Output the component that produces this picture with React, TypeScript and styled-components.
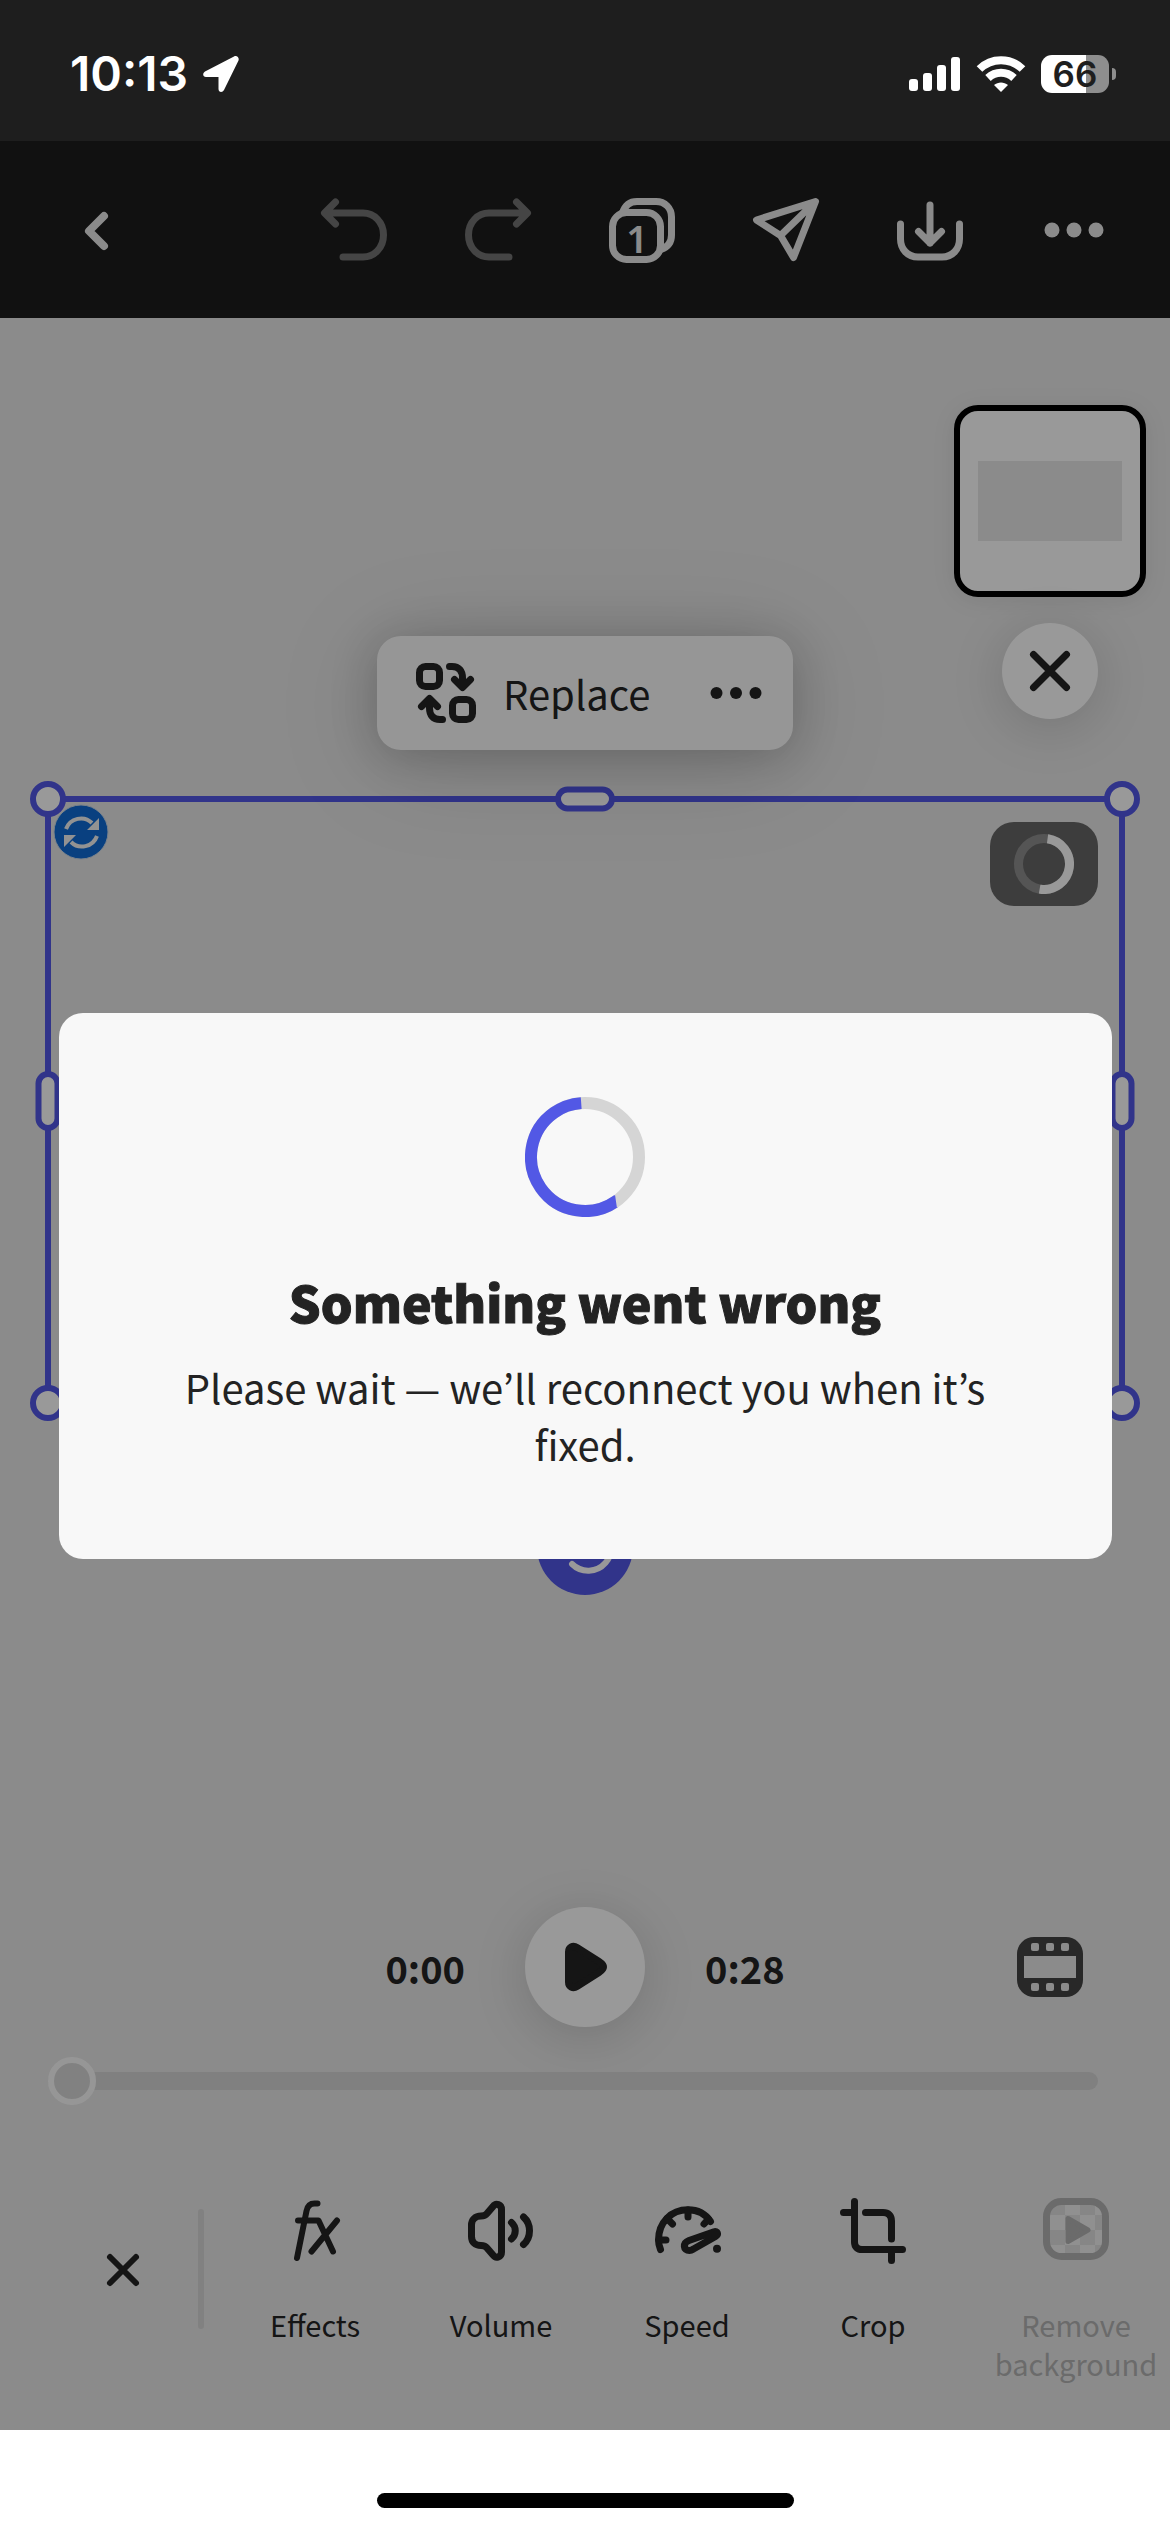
import React from "react";
import styled, { createGlobalStyle, css } from "styled-components";

const GlobalStyle = createGlobalStyle`
  * { box-sizing: border-box; }
  body { margin: 0; background: #fff; }
  button { border: 0; padding: 0; margin: 0; background: none; color: inherit; font: inherit; cursor: pointer; }
`;

const ink = "#232323";
const accent = "#5257e6";
const canvas = "#e8e8e8";
const sans = `"Noto Sans CJK KR", "Noto Sans", sans-serif`;

const Screen = styled.div`
  display: flex;
  flex-direction: column;
  min-height: 100vh;
  font-family: ${sans};
  color: ${ink};
`;

/* ---------- status bar ---------- */

const StatusBar = styled.header`
  display: flex;
  justify-content: space-between;
  align-items: center;
  height: 141px;
  padding: 7px 54px 0 70px;
  background: #1e1e1e;
  color: #fff;
`;

const StatusGroup = styled.div`
  display: flex;
  align-items: center;
  gap: 15px;
`;

const Clock = styled.time`
  font: 600 48px/54px Inter, sans-serif;
`;

const BatteryWrap = styled.div`
  display: flex;
  align-items: center;
  gap: 3px;
`;

const Battery = styled.div`
  width: 68px;
  height: 38px;
  border-radius: 11px;
  background: linear-gradient(to right, #fff 66%, #8e8e8e 66%);
  color: #1e1e1e;
  font: 600 35px/38px Inter, sans-serif;
  text-align: center;
`;

const BatteryTip = styled.div`
  width: 4px;
  height: 12px;
  border-radius: 0 4px 4px 0;
  background: #8e8e8e;
`;

/* ---------- editor ---------- */

const Editor = styled.main`
  position: relative;
  flex: 1;
  display: flex;
  flex-direction: column;
  background: ${canvas};
`;

const TopBar = styled.nav`
  display: flex;
  align-items: center;
  height: 177px;
  padding: 0 24px;
  background: #1d1d1d;
`;

const BarSpacer = styled.div`
  flex: 1;
`;

const BarButton = styled.button`
  display: grid;
  place-items: center;
  width: 144px;
  height: 144px;
  color: #e8e8e8;
  &:disabled { color: #737373; }
`;

const Glyph = styled.svg<{ $stroke?: number }>`
  display: block;
  width: 72px;
  height: 72px;
  fill: none;
  stroke: currentColor;
  stroke-width: ${(p) => p.$stroke ?? 7};
  stroke-linecap: round;
  stroke-linejoin: round;
`;

const PageCount = styled.text`
  fill: currentColor;
  stroke: none;
  font: 600 38px "Noto Sans", sans-serif;
  text-anchor: middle;
`;

const Stage = styled.section`
  flex: 1;
  padding-top: 87px;
`;

const PageRail = styled.div`
  display: flex;
  flex-direction: column;
  align-items: center;
  gap: 26px;
  width: 192px;
  margin: 0 24px 77px auto;
`;

const PageThumb = styled.button`
  display: grid;
  place-items: center;
  width: 192px;
  height: 192px;
  border: 6px solid #000;
  border-radius: 24px;
  background: #fff;
  box-shadow: 0 3px 24px rgba(0, 0, 0, 0.08);
`;

const PagePreview = styled.span`
  width: 144px;
  height: 80px;
  background: ${canvas};
`;

const RoundButton = styled.button<{ $size: number }>`
  display: grid;
  place-items: center;
  width: ${(p) => p.$size}px;
  height: ${(p) => p.$size}px;
  border-radius: 50%;
  background: #fff;
  box-shadow: 0 9px 54px rgba(0, 0, 0, 0.16);
`;

const Selection = styled.div`
  position: relative;
  margin: 0 45px;
  aspect-ratio: 1080 / 610;
  border: 6px solid ${accent};
`;

type Spot = { $x: number; $y: number };

const Handle = styled.span<Spot & { $kind: "corner" | "wide" | "tall" }>`
  position: absolute;
  left: ${(p) => p.$x}%;
  top: ${(p) => p.$y}%;
  border: 6px solid ${accent};
  background: #fff;
  border-radius: 18px;
  transform: translate(-50%, -50%);
  ${(p) => p.$kind === "corner" && css`width: 36px; height: 36px;`}
  ${(p) => p.$kind === "wide" && css`width: 60px; height: 25px;`}
  ${(p) => p.$kind === "tall" && css`width: 25px; height: 60px;`}
`;

const HandleLayer = styled.div`
  position: absolute;
  inset: -3px;
`;

const SyncBadge = styled.svg`
  position: absolute;
  left: 2px;
  top: 2px;
  width: 56px;
  height: 56px;
`;

const LoadBadge = styled.div`
  position: absolute;
  right: 21px;
  top: 20px;
  display: grid;
  place-items: center;
  width: 108px;
  height: 84px;
  border-radius: 24px;
  background: #666;
`;

const ContextBar = styled.div`
  position: absolute;
  left: 50%;
  bottom: calc(100% + 52px);
  transform: translateX(-50%);
  display: flex;
  align-items: center;
  width: 416px;
  height: 114px;
  padding: 0 21px 0 33px;
  border-radius: 24px;
  background: #fbfbfb;
  box-shadow: 0 12px 108px rgba(0, 0, 0, 0.14), 0 6px 48px rgba(0, 0, 0, 0.2);
`;

const ContextAction = styled.button`
  display: flex;
  align-items: center;
  gap: 21px;
  flex: 1;
  font-size: 40px;
  line-height: 57px;
`;

const RotateButton = styled.button`
  position: absolute;
  left: 50%;
  top: calc(100% + 99px);
  transform: translateX(-50%);
  display: grid;
  place-items: center;
  width: 96px;
  height: 96px;
  border-radius: 50%;
  background: ${accent};
  color: #fff;
`;

/* ---------- player ---------- */

const Player = styled.section`
  display: grid;
  grid-template-columns: 1fr auto 1fr;
  align-items: center;
  column-gap: 60px;
  padding: 0 72px;
`;

const Time = styled.span<{ $end?: boolean }>`
  justify-self: ${(p) => (p.$end ? "end" : "start")};
  font-weight: 700;
  font-size: 38px;
  line-height: 57px;
`;

const TimeRow = styled.div`
  display: flex;
  align-items: center;
  justify-content: space-between;
`;

const FilmButton = styled.button`
  display: grid;
  place-items: center;
  width: 96px;
  height: 96px;
  color: #434343;
`;

const Seek = styled.input`
  appearance: none;
  display: block;
  height: 48px;
  margin: 30px 72px 0 48px;
  background: none;
  &::-webkit-slider-runnable-track {
    height: 18px;
    border-radius: 9px;
    background: #d6d6d6;
  }
  &::-webkit-slider-thumb {
    appearance: none;
    width: 48px;
    height: 48px;
    margin-top: -15px;
    border: 6px solid #fbfbfb;
    border-radius: 50%;
    background: #d8d8d8;
  }
`;

/* ---------- bottom tools ---------- */

const Tools = styled.nav`
  display: flex;
  align-items: flex-start;
  padding: 89px 0 47px 48px;
  overflow: hidden;
`;

const CloseGroup = styled.div`
  display: flex;
  align-items: center;
  height: 150px;
  margin-right: 18px;
`;

const CloseTools = styled.button`
  display: grid;
  place-items: center;
  width: 150px;
  height: 150px;
`;

const Divider = styled.span`
  width: 6px;
  height: 120px;
  border-radius: 3px;
  background: #d8d8d8;
`;

const Tool = styled.button<{ $wide?: boolean }>`
  flex: none;
  display: flex;
  flex-direction: column;
  align-items: center;
  gap: 39px;
  width: ${(p) => (p.$wide ? 220 : 186)}px;
  font-size: 29px;
  line-height: 39px;
  &:disabled { color: #b2b2b2; }
`;

/* ---------- dialog ---------- */

const Scrim = styled.div`
  position: absolute;
  inset: 0;
  display: grid;
  place-items: center;
  background: rgba(0, 0, 0, 0.4);
`;

const Dialog = styled.div`
  display: flex;
  flex-direction: column;
  align-items: center;
  width: 90%;
  padding: 84px 96px 86px;
  border-radius: 24px;
  background: #f8f8f8;
  text-align: center;
`;

const DialogTitle = styled.h1`
  margin: 54px 0 28px;
  font-size: 50px;
  line-height: 60px;
  font-weight: 900;
  -webkit-text-stroke: 1px currentColor;
`;

const DialogText = styled.p`
  margin: 0;
  font-size: 40px;
  line-height: 57px;
`;

const HomeArea = styled.footer`
  display: flex;
  justify-content: center;
  align-items: flex-end;
  height: 102px;
  padding-bottom: 24px;
  background: #fff;
`;

const HomeIndicator = styled.div`
  width: 417px;
  height: 15px;
  border-radius: 8px;
  background: #000;
`;

/* ---------- drawings ---------- */

type IconProps = { children: React.ReactNode; stroke?: number };
const Icon = ({ children, stroke }: IconProps) => (
  <Glyph viewBox="0 0 72 72" $stroke={stroke} aria-hidden="true">{children}</Glyph>
);

const undoPath = "M17.5 8L6.5 19L17.5 30M8 19H45C56 19 65.5 28 65.5 41S56 63 45 63H25";

const Dots = ({ gap, r }: { gap: number; r: number }) => (
  <g fill="currentColor" stroke="none">
    <circle cx={36 - gap} cy="36" r={r} />
    <circle cx="36" cy="36" r={r} />
    <circle cx={36 + gap} cy="36" r={r} />
  </g>
);

type RingProps = { size: number; width: number; from: number; sweep: number; track: string; color: string };
const Ring = ({ size, width, from, sweep, track, color }: RingProps) => {
  const c = size / 2;
  const r = c - width / 2;
  return (
    <svg width={size} height={size} fill="none" strokeWidth={width} aria-hidden="true">
      <circle cx={c} cy={c} r={r} stroke={track} />
      <circle
        cx={c} cy={c} r={r} stroke={color} pathLength={360}
        strokeDasharray={`${sweep} ${360 - sweep}`}
        transform={`rotate(${from - 90} ${c} ${c})`}
      />
    </svg>
  );
};

const EffectsIcon = () => (
  <Icon stroke={6}>
    <path d="M38.5 9.5H35.5C31 9.5 28.5 12 27.5 17L18 64" />
    <path d="M19 26.5H39.5L54 57.5M58 26.5L32.5 57.5" />
  </Icon>
);

const VolumeIcon = () => (
  <Icon>
    <path d="M28 12.5L22 19.5C20.5 21.5 18.5 22 16 22C10 22 6.5 26 6.5 31V42.5C6.5 48 10 51.5 16 51.5C18.5 51.5 20.5 52 22 54L28 61C31 65 36.5 63 36.5 58V15.5C36.5 10.5 31 8.5 28 12.5Z" />
    <path d="M46.5 28.5C51.5 33 51.5 40.5 46.5 45M58.5 23C66.5 30 66.5 43.5 58.5 50.5" />
  </Icon>
);

const SpeedIcon = () => (
  <Icon>
    <path d="M9.5 55.5C8 52 7.5 49 7.5 46C7.5 28.5 20 15.8 37 15.8C46.5 15.8 54.5 20 59.5 27.5" />
    <path d="M37 16V23M16 24.5L21.5 30M57.5 25L53 30M8 46H15" />
    <path d="M63 37.8L38 46.5C31.5 49 32 56.5 38.5 56.5C40 56.5 41 56 42.5 55L64.5 42.5C68 40.5 66.5 36.8 63 37.8Z" />
    <circle cx="66" cy="54.7" r="4" fill="currentColor" stroke="none" />
  </Icon>
);

const CropIcon = () => (
  <Icon>
    <path d="M17.5 7.5V48C17.5 53 20.5 55.5 25 55.5H65.5M6.5 18.5H17.5M28.5 18.5H46C51.5 18.5 54.5 21.5 54.5 27V45M54.5 55.5V66.5" />
  </Icon>
);

const RemoveIcon = () => (
  <Icon>
    <clipPath id="tiles"><rect x="7" y="7" width="58" height="57" rx="14" /></clipPath>
    <g clipPath="url(#tiles)" stroke="none">
      <rect width="72" height="72" fill="#f1f1f1" />
      <path fill="#dfdfdf" d="M10 6h15v15H10zM40 6h15v15H40zM25 21h15v15H25zM55 21h15v15H55zM10 36h15v15H10zM40 36h15v15H40zM25 51h15v15H25zM55 51h15v15H55z" />
    </g>
    <rect x="6.5" y="7.5" width="59" height="55" rx="15" />
    <path fill="currentColor" strokeWidth="5" d="M28 24.500V47.500L48 36Z" />
  </Icon>
);

const tools = [
  { label: "Effects", icon: <EffectsIcon /> },
  { label: "Volume", icon: <VolumeIcon /> },
  { label: "Speed", icon: <SpeedIcon /> },
  { label: "Crop", icon: <CropIcon /> },
];

export default function App() {
  return (
    <Screen>
      <GlobalStyle />
      <StatusBar>
        <StatusGroup>
          <Clock>10:13</Clock>
          <svg width="36" height="36" viewBox="0 0 36 36" fill="#fff" aria-hidden="true">
            <path d="M31 .5 2 15.500C-1 17.500 0 21 3 21H15.500V33C15.500 36.500 19.500 37 21 34L35.500 4.500C36.500 2 34-1 31 .5Z" />
          </svg>
        </StatusGroup>
        <StatusGroup>
          <svg width="52" height="36" viewBox="0 0 52 36" fill="#fff" aria-hidden="true">
            <rect x="0" y="23" width="9" height="12" rx="3" />
            <rect x="14" y="17" width="9" height="18" rx="3" />
            <rect x="28" y="9" width="9" height="26" rx="3" />
            <rect x="42" y="1" width="9" height="34" rx="3" />
          </svg>
          <svg width="50" height="36" viewBox="0 0 50 36" fill="none" stroke="#fff" aria-hidden="true">
            <path strokeWidth="8" d="M3.500 13C15.500 1.200 34.500 1.200 46.500 13" />
            <path strokeWidth="8" d="M12 22C19.500 15 30.500 15 38 22" />
            <path fill="#fff" stroke="none" d="M25 36 18 29C22 25.500 28 25.500 32 29Z" />
          </svg>
          <BatteryWrap>
            <Battery>66</Battery>
            <BatteryTip />
          </BatteryWrap>
        </StatusGroup>
      </StatusBar>

      <Editor>
        <TopBar>
          <BarButton aria-label="Back"><Icon stroke={8}><path d="M44 22L29 37L44 52" /></Icon></BarButton>
          <BarSpacer />
          <BarButton aria-label="Undo" disabled><Icon><path d={undoPath} /></Icon></BarButton>
          <BarButton aria-label="Redo" disabled>
            <Icon><path d={undoPath} transform="translate(72 0) scale(-1 1)" /></Icon>
          </BarButton>
          <BarButton aria-label="Pages">
            <Icon>
              <rect x="6.5" y="18.5" width="48" height="47" rx="14" />
              <path strokeLinecap="butt" d="M16.500 19C19 11 24 7.500 31 7.500H50C59 7.500 65.500 14 65.500 23V41C65.500 48 62 53 55 55.500" />
              <PageCount x="31" y="59">1</PageCount>
            </Icon>
          </BarButton>
          <BarButton aria-label="Share">
            <Icon><path d="M65.500 7.500L6.500 26L30.500 41.500L43.500 63.500ZM30.500 41.500L64 9" /></Icon>
          </BarButton>
          <BarButton aria-label="Download">
            <Icon>
              <path d="M6.500 30V45C6.500 55 13.500 63 24 63H48C58.500 63 65.500 55 65.500 45V30M36 11V49M24.500 37.500L36 49L47.500 37.500" />
            </Icon>
          </BarButton>
          <BarButton aria-label="More"><Icon><Dots gap={22} r={7.5} /></Icon></BarButton>
        </TopBar>

        <Stage>
          <PageRail>
            <PageThumb aria-label="Page 1"><PagePreview /></PageThumb>
            <RoundButton $size={96} aria-label="Close preview">
              <Icon><path d="M19.500 19.500L52.500 52.500M52.500 19.500L19.500 52.500" /></Icon>
            </RoundButton>
          </PageRail>

          <Selection>
            <SyncBadge viewBox="0 0 56 56" aria-hidden="true">
              <circle cx="28" cy="28" r="27" fill="#0f6cd6" stroke="#c8d8ea" strokeWidth="1" />
              <g fill="none" stroke="#f4f4f4" strokeWidth="4">
                <path d="M13 25C17 14 31 11 39 19M44 32C40 43 26 46 18 38" />
              </g>
              <path fill="#f4f4f4" d="M46 14V26H34ZM11 43V31H23Z" />
            </SyncBadge>
            <LoadBadge><Ring size={60} width={9} from={8} sweep={182} track="#8e8e8e" color="#fff" /></LoadBadge>
            <HandleLayer>
              <Handle $kind="corner" $x={0} $y={0} />
              <Handle $kind="corner" $x={100} $y={0} />
              <Handle $kind="corner" $x={0} $y={100} />
              <Handle $kind="corner" $x={100} $y={100} />
              <Handle $kind="wide" $x={50} $y={0} />
              <Handle $kind="wide" $x={50} $y={100} />
              <Handle $kind="tall" $x={0} $y={50} />
              <Handle $kind="tall" $x={100} $y={50} />
            </HandleLayer>
            <ContextBar>
              <ContextAction>
                <Icon>
                  <rect x="9.500" y="9.500" width="20" height="20" rx="6" />
                  <rect x="42.500" y="42.500" width="20" height="20" rx="6" />
                  <path d="M39.500 9.500H42C49 9.500 52.500 14 52.500 21V30M44.500 22.500L52.500 30.500L60.500 22.500" />
                  <path d="M32.500 62.500H30C23 62.500 19.500 58 19.500 51V42M11.500 49.500L19.500 41.500L27.500 49.500" />
                </Icon>
                Replace
              </ContextAction>
              <button aria-label="More actions"><Icon><Dots gap={19.5} r={6} /></Icon></button>
            </ContextBar>
            <RotateButton aria-label="Rotate">
              <Icon stroke={6}><path d="M23 53A23 23 0 1 0 20 24M18 12V25H31" /></Icon>
            </RotateButton>
          </Selection>
        </Stage>

        <Player aria-label="Playback">
          <Time $end>0:00</Time>
          <RoundButton $size={120} aria-label="Play">
            <Icon><path fill="currentColor" d="M19.500 21V51C19.500 56 24 58 28 55.500L50 41.500C56 37.500 56 34.500 50 30.500L28 16.500C24 14 19.500 16 19.500 21Z" /></Icon>
          </RoundButton>
          <TimeRow>
            <Time>0:28</Time>
            <FilmButton aria-label="Timeline">
              <Icon>
                <rect x="3" y="6" width="66" height="60" rx="17" fill="currentColor" stroke="none" />
                <g fill={canvas} stroke="none">
                  <rect x="10" y="25" width="52" height="22" />
                  <rect x="17" y="12" width="8" height="8" rx="2" />
                  <rect x="32" y="12" width="8" height="8" rx="2" />
                  <rect x="47" y="12" width="8" height="8" rx="2" />
                  <rect x="17" y="52" width="8" height="8" rx="2" />
                  <rect x="32" y="52" width="8" height="8" rx="2" />
                  <rect x="47" y="52" width="8" height="8" rx="2" />
                </g>
              </Icon>
            </FilmButton>
          </TimeRow>
        </Player>
        <Seek type="range" min={0} max={28} defaultValue={0} aria-label="Seek" />

        <Tools>
          <CloseGroup>
            <CloseTools aria-label="Close tools">
              <Icon stroke={6}><path d="M23 24L49 50M49 24L23 50" /></Icon>
            </CloseTools>
            <Divider />
          </CloseGroup>
          {tools.map((t) => (
            <Tool key={t.label}>{t.icon}<span>{t.label}</span></Tool>
          ))}
          <Tool $wide disabled><RemoveIcon /><span>Remove<br />background</span></Tool>
        </Tools>

        <Scrim>
          <Dialog role="alertdialog" aria-labelledby="dialog-title" aria-describedby="dialog-text">
            <Ring size={120} width={12} from={145} sweep={211} track="#d5d5d5" color="#5258e5" />
            <DialogTitle id="dialog-title">Something went wrong</DialogTitle>
            <DialogText id="dialog-text">Please wait — we’ll reconnect you when it’s fixed.</DialogText>
          </Dialog>
        </Scrim>
      </Editor>

      <HomeArea><HomeIndicator /></HomeArea>
    </Screen>
  );
}
